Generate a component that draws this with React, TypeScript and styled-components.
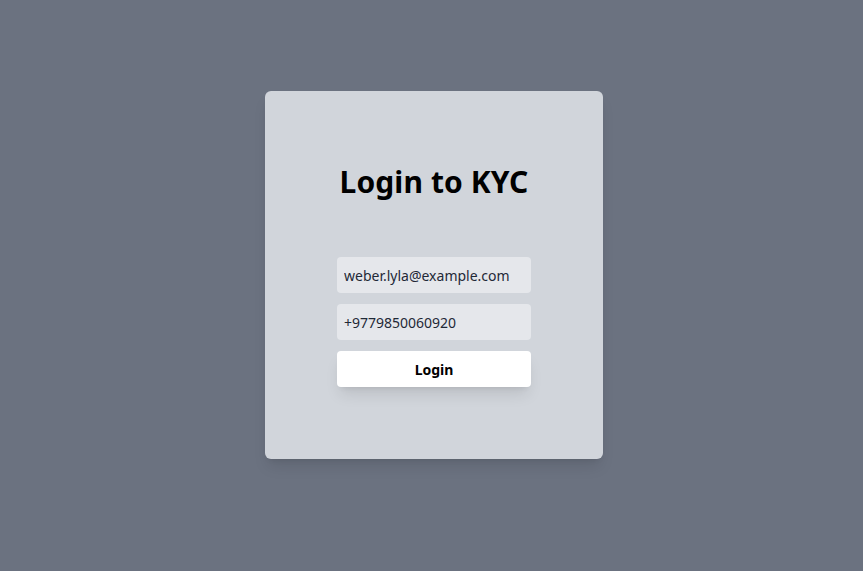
import React from 'react';
import styled, {createGlobalStyle} from 'styled-components';

const GlobalStyle = createGlobalStyle`
  html, body {
    margin: 0;
    height: 100%;
    background: #6b7280;
    font-family: 'Noto Sans', 'Open Sans', sans-serif;
  }
  #root {
    min-height: 100vh;
  }
`;

const Page = styled.div`
  display: flex;
  justify-content: center;
  padding: 91px 0 0 5px;
`;

const Card = styled.div`
  width: 338px;
  height: 368px;
  box-sizing: border-box;
  background: #d1d5db;
  border-radius: 6px;
  box-shadow: 0 10px 15px -3px rgba(0, 0, 0, 0.1), 0 4px 6px -4px rgba(0, 0, 0, 0.1);
  display: flex;
  flex-direction: column;
  align-items: center;
  padding-top: 73px;
`;

const Title = styled.h1`
  margin: 0;
  font-size: 30px;
  line-height: 36px;
  font-weight: 700;
  color: #000;
  letter-spacing: 0.1px;
`;

const Form = styled.form`
  width: 194px;
  margin-top: 57px;
  display: flex;
  flex-direction: column;
  gap: 11px;
`;

const Input = styled.input`
  height: 36px;
  box-sizing: border-box;
  border: none;
  outline: none;
  border-radius: 4px;
  background: #e5e7eb;
  padding: 0 7px;
  font-family: inherit;
  font-size: 14px;
  color: #1f2937;
`;

const Button = styled.button`
  height: 36px;
  border: none;
  border-radius: 4px;
  background: #fff;
  box-shadow: 0 10px 15px -3px rgba(0, 0, 0, 0.1), 0 4px 6px -4px rgba(0, 0, 0, 0.1);
  font-family: inherit;
  font-size: 14px;
  font-weight: 700;
  color: #000;
  cursor: pointer;
`;

export default function App() {
  return (
    <>
      <GlobalStyle />
      <Page>
        <Card>
          <Title>Login to KYC</Title>
          <Form onSubmit={(e) => e.preventDefault()}>
            <Input type="email" defaultValue="weber.lyla@example.com" />
            <Input type="tel" defaultValue="+9779850060920" />
            <Button type="submit">Login</Button>
          </Form>
        </Card>
      </Page>
    </>
  );
}
